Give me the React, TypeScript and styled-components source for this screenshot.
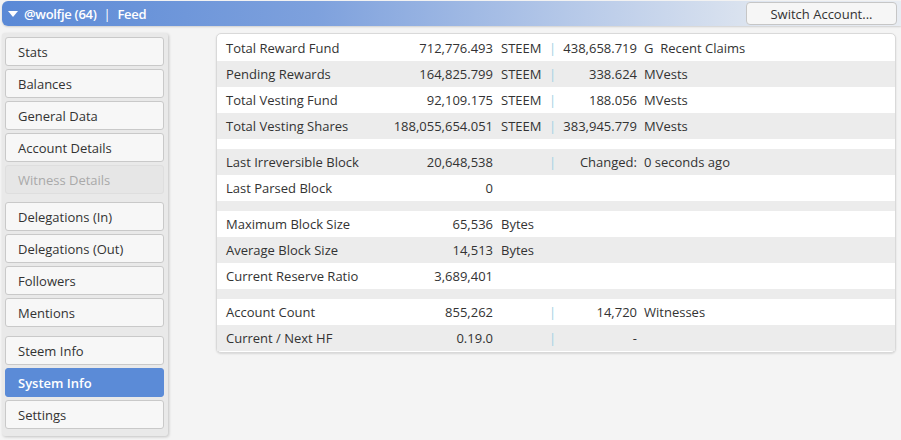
import React from "react";
import styled, { createGlobalStyle } from "styled-components";

const Global = createGlobalStyle`
  html, body { margin: 0; padding: 0; background: #f4f4f4; }
  body { font-family: "Open Sans", "Liberation Sans", sans-serif; font-size: 13px; color: #333; }
`;

const Page = styled.div`
  width: 901px;
  height: 440px;
  overflow: hidden;
  background: #f4f4f4;
`;

const Header = styled.div`
  margin: 1px 0 0 2px;
  height: 25px;
  display: flex;
  align-items: center;
  justify-content: space-between;
  border-radius: 6px 0 0 6px;
  background: linear-gradient(to right, #5a89d6 0%, #7ea1dd 35%, #b9cbe9 65%, #dfe6f0 85%, #e8ecf2 100%);
  box-shadow: 0 1px 2px rgba(0,0,0,0.15);
`;

const Title = styled.div`
  display: flex;
  align-items: center;
  gap: 5px;
  padding-left: 6px;
  color: #fff;
  font-weight: 600;
  font-size: 13px;
  letter-spacing: -0.3px;
`;

const Caret = styled.span`
  width: 0;
  height: 0;
  border-left: 5px solid transparent;
  border-right: 5px solid transparent;
  border-top: 6px solid #fff;
  margin-right: 1px;
  margin-top: 1px;
`;

const Pipe = styled.span`
  margin: 0 2px;
  font-weight: 400;
`;

const SwitchButton = styled.button`
  width: 151px;
  height: 23px;
  margin-right: 4px;
  background: #f6f6f6;
  border: 1px solid #c6c6c6;
  border-radius: 4px;
  font-family: "Open Sans", "Liberation Sans", sans-serif;
  font-size: 13px;
  color: #333;
  padding: 0;
`;

const Body = styled.div`
  display: flex;
  align-items: flex-start;
  gap: 48px;
  padding: 7px 0 0 2px;
`;

const Sidebar = styled.div`
  width: 159px;
  padding: 4px 4px 7px 3px;
  background: #e9e9e9;
  border-radius: 3px;
  box-shadow: 1px 1px 3px rgba(0,0,0,0.2);
  display: flex;
  flex-direction: column;
  gap: 8px;
`;

const Group = styled.div`
  display: flex;
  flex-direction: column;
  gap: 3px;
  & + & + & { margin-top: 1px; }
`;

const NavButton = styled.div<{ $active?: boolean; $disabled?: boolean }>`
  height: 27px;
  box-sizing: content-box;
  display: flex;
  align-items: center;
  padding-left: 12px;
  border-radius: 3px;
  border: 1px solid ${(p) => (p.$active ? "#5b8bd7" : p.$disabled ? "#dedede" : "#c9c9c9")};
  background: ${(p) => (p.$active ? "#5b8bd7" : p.$disabled ? "#e6e6e6" : "#f7f7f7")};
  color: ${(p) => (p.$active ? "#fff" : p.$disabled ? "#a9a9a9" : "#333")};
  font-weight: ${(p) => (p.$active ? 600 : 400)};
  font-size: 13px;
`;

const Panel = styled.div`
  width: 678px;
  padding: 1px 0;
  background: #fff;
  border: 1px solid #d9d9d9;
  border-radius: 5px;
  box-shadow: 0 1px 2px rgba(0,0,0,0.12);
`;

const Row = styled.div<{ $spacer?: boolean }>`
  display: grid;
  grid-template-columns: 143px 137px 52px 11px 81px 1fr;
  align-items: center;
  height: ${(p) => (p.$spacer ? "10px" : "26px")};
  &:nth-child(even) { background: #ececec; }
`;

const Label = styled.div`
  padding-left: 9px;
  white-space: nowrap;
`;

const Num = styled.div`
  text-align: right;
  padding-right: 4px;
  white-space: nowrap;
`;

const Unit = styled.div<{ $pad?: number }>`
  padding-left: ${(p) => p.$pad ?? 4}px;
  white-space: pre;
`;

const Sep = styled.div`
  color: #9fd2e4;
  text-align: left;
`;

type R = { l: string; v?: string; u?: string; sep?: boolean; v2?: string; u2?: string } | null;

const rows: R[] = [
  { l: "Total Reward Fund", v: "712,776.493", u: "STEEM", sep: true, v2: "438,658.719", u2: "G  Recent Claims" },
  { l: "Pending Rewards", v: "164,825.799", u: "STEEM", sep: true, v2: "338.624", u2: "MVests" },
  { l: "Total Vesting Fund", v: "92,109.175", u: "STEEM", sep: true, v2: "188.056", u2: "MVests" },
  { l: "Total Vesting Shares", v: "188,055,654.051", u: "STEEM", sep: true, v2: "383,945.779", u2: "MVests" },
  null,
  { l: "Last Irreversible Block", v: "20,648,538", sep: true, v2: "Changed:", u2: "0 seconds ago" },
  { l: "Last Parsed Block", v: "0" },
  null,
  { l: "Maximum Block Size", v: "65,536", u: "Bytes" },
  { l: "Average Block Size", v: "14,513", u: "Bytes" },
  { l: "Current Reserve Ratio", v: "3,689,401" },
  null,
  { l: "Account Count", v: "855,262", sep: true, v2: "14,720", u2: "Witnesses" },
  { l: "Current / Next HF", v: "0.19.0", sep: true, v2: "-" },
];

const groups: { name: string; active?: boolean; disabled?: boolean }[][] = [
  [{ name: "Stats" }, { name: "Balances" }, { name: "General Data" }, { name: "Account Details" }, { name: "Witness Details", disabled: true }],
  [{ name: "Delegations (In)" }, { name: "Delegations (Out)" }, { name: "Followers" }, { name: "Mentions" }],
  [{ name: "Steem Info" }, { name: "System Info", active: true }, { name: "Settings" }],
];

export default function App() {
  return (
    <Page>
      <Global />
      <Header>
        <Title>
          <Caret />
          <span>@wolfje (64)</span>
          <Pipe>|</Pipe>
          <span>Feed</span>
        </Title>
        <SwitchButton>Switch Account...</SwitchButton>
      </Header>
      <Body>
        <Sidebar>
          {groups.map((g, i) => (
            <Group key={i}>
              {g.map((b) => (
                <NavButton key={b.name} $active={b.active} $disabled={b.disabled}>
                  {b.name}
                </NavButton>
              ))}
            </Group>
          ))}
        </Sidebar>
        <Panel>
          {rows.map((r, i) =>
            r ? (
              <Row key={i}>
                <Label>{r.l}</Label>
                <Num>{r.v}</Num>
                <Unit>{r.u}</Unit>
                <Sep>{r.sep ? "|" : ""}</Sep>
                <Num>{r.v2}</Num>
                <Unit $pad={3}>{r.u2}</Unit>
              </Row>
            ) : (
              <Row key={i} $spacer />
            )
          )}
        </Panel>
      </Body>
    </Page>
  );
}
